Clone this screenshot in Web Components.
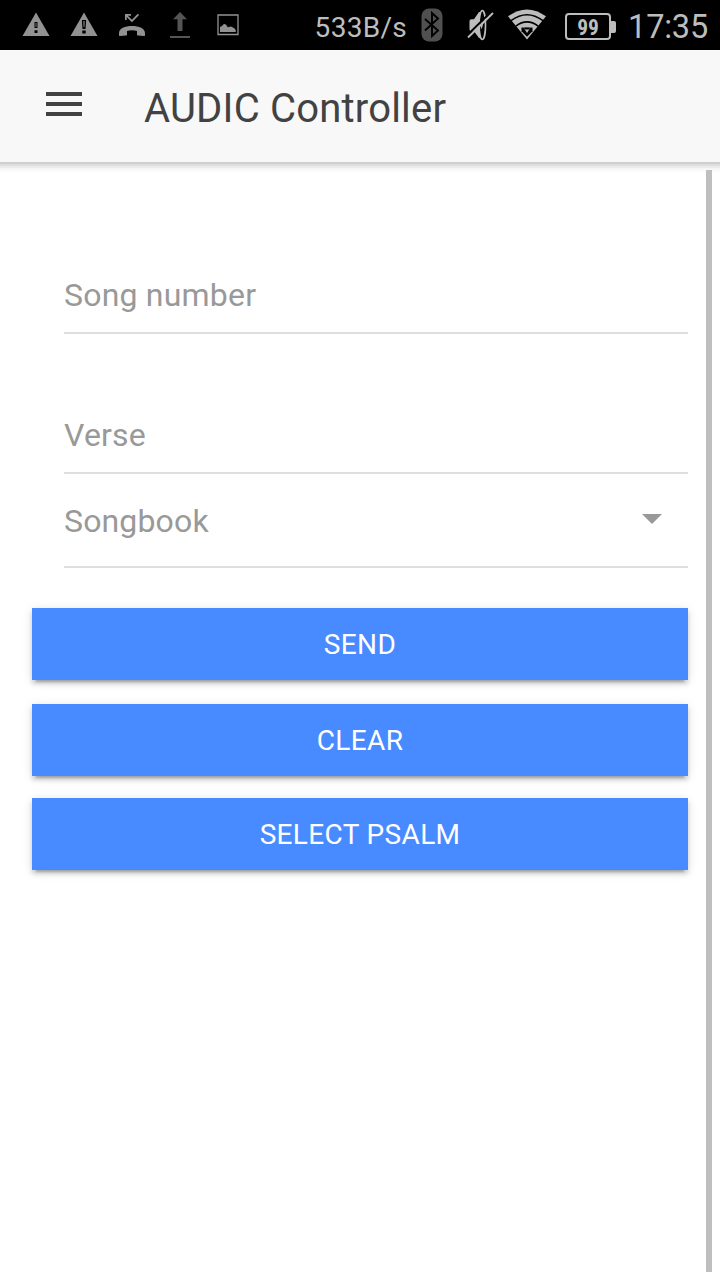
<!DOCTYPE html>
<html lang="en">
<head>
<meta charset="utf-8">
<title>AUDIC Controller</title>
<style>
  body {
    margin: 0;
    background: #fff;
    font-family: Roboto, "Noto Sans", sans-serif;
  }
</style>
</head>
<body>
<audic-app>
  <status-bar slot="status" speed="533B/s" battery="99" time="17:35"></status-bar>
  <nav-bar slot="header">AUDIC Controller</nav-bar>
  <text-field>Song number</text-field>
  <text-field>Verse</text-field>
  <select-field>Songbook</select-field>
  <action-button>SEND</action-button>
  <action-button>CLEAR</action-button>
  <action-button class="tight">SELECT PSALM</action-button>
</audic-app>

<script>
const ICONS = {
  warning: {
    box: "0 0 28 28",
    body: `<path d="M14 2.500 27.500 26H.5Z" fill="#929292"/>
      <path d="M12.500 12h3v6h-3zM12.500 20.300h3v2.700h-3z" fill="#000"/>
      <path d="M13.500 13h1v4h-1z" fill="#777"/>`,
  },
  warningTall: {
    box: "0 0 28 28",
    body: `<path d="M14 2.500 27.500 26H.5Z" fill="#929292"/>
      <path d="M12 10h4v3l-.5 6h-3l-.5-6zM12.300 20.500h3.400v3h-3.400z" fill="#000"/>
      <path d="M13.300 11h1.400v3l-.3 3h-.8l-.3-3z" fill="#777"/>`,
  },
  missedCall: {
    box: "0 0 28 28",
    body: `<g fill="#929292"><path d="M1 23c0-4.500 6-7 13-7s13 2.500 13 7v2c0 .7-.4 1-1 1l-6-.6c-.6 0-1-.4-1-1V21c-3.200-1-6.800-1-10 0v3.400c0 .6-.4 1-1 1L2 26c-.6 0-1-.3-1-1z"/>
      <path d="M7 4h6v1.700H9.900l4 4 5.900-6 1.300 1.300-7.200 7.200L8.700 7V10H7z"/></g>`,
  },
  upload: {
    box: "0 0 28 28",
    body: `<path d="M14 2 21 9.300h-4.500V21h-5V9.300H7zM4 26h20v2H4z" fill="#555"/>`,
  },
  picture: {
    box: "0 0 28 28",
    body: `<path d="M4 5h20v19.500H4z" fill="none" stroke="#929292" stroke-width="1.300"/>
      <path d="M6 22v-5l2-1 2-2.200 2.200 1 1.500 2.500 3.300-.8 3 1.500 1.700 2v2z" fill="#929292"/>`,
  },
  bluetooth: {
    box: "0 0 22 34",
    body: `<rect x=".5" y=".5" width="21" height="33" rx="7.500" fill="#505050"/>
      <path d="M4 11 17 22.500 11 28V5l6 5.500L4 22.500" fill="none" stroke="#000" stroke-width="1.900"/>`,
  },
  mute: {
    box: "0 0 28 34",
    body: `<path d="M2.500 13q0-1.500 2-1.800H7L12 4h2v26h-2l-5-6.700H4.500q-2-.3-2-1.800z" fill="#bdbdbd"/>
      <ellipse cx="15.300" cy="17" rx="3.200" ry="14.500" fill="#000" stroke="#bdbdbd" stroke-width="1.600"/>
      <path d="M13.800 12.500q4 4.500 0 9z" fill="#bdbdbd"/>
      <path d="M0 27.500 25 3" stroke="#000" stroke-width="2"/>
      <path d="M1 29.500 26 5" stroke="#bdbdbd" stroke-width="1.900"/>`,
  },
  wifi: {
    box: "0 0 40 32",
    body: `<path d="M1 8.300Q20-5.500 39 8.300L20 31.500Z" fill="#bdbdbd"/>
      <path d="M4 12.600Q20 .8 36 12.600M8.800 18.200Q20 9.600 31.200 18.200" fill="none" stroke="#000" stroke-width="1.600"/>
      <path d="M14.500 19.500h11v3.700L20 28.800l-5.500-5.600z" fill="#000"/>
      <path d="M16.500 19.500h7L20 25z" fill="#bdbdbd"/>
      <path d="M17.300 19.500h5.400v2h-5.400z" fill="#000"/>`,
  },
};

class statusIcon extends HTMLElement {
  connectedCallback() {
    const icon = ICONS[this.getAttribute("name")];
    const [, , width, height] = icon.box.split(" ");

    this.attachShadow({ mode: "open" }).innerHTML = /* html */ `
      <style>
        :host { display: block; width: ${width}px; height: ${height}px; flex: none; }
        svg { display: block; }
      </style>
      <svg width="${width}" height="${height}" viewBox="${icon.box}">${icon.body}</svg>`;
  }
}

class batteryLevel extends HTMLElement {
  connectedCallback() {
    this.attachShadow({ mode: "open" }).innerHTML = /* html */ `
      <style>
        :host { display: flex; align-items: center; flex: none; }
        .cell {
          box-sizing: border-box;
          width: 46px;
          height: 27px;
          border: 2px solid #bdbdbd;
          border-radius: 4px;
          text-align: center;
          color: #bdbdbd;
          font: bold 21.500px/25px "Roboto Condensed", Roboto, sans-serif;
        }
        .cell span { display: inline-block; }
        .nub { width: 5px; height: 12px; border-radius: 0 2px 2px 0; background: #bdbdbd; }
      </style>
      <div class="cell"><span><slot></slot></span></div>
      <div class="nub"></div>`;
  }
}

class statusBar extends HTMLElement {
  connectedCallback() {
    this.attachShadow({ mode: "open" }).innerHTML = /* html */ `
      <style>
        :host {
          display: flex;
          justify-content: space-between;
          box-sizing: border-box;
          height: 50px;
          padding: 0 12px 0 22px;
          background: #000;
          color: #bdbdbd;
        }
        .notifications { display: flex; gap: 20px; padding-top: 10px; }
        .system { display: flex; align-items: flex-start; }
        .speed { font-size: 28px; line-height: 34px; letter-spacing: .3px; margin: 11px 14px 0 0; }
        .bluetooth { margin: 8px 24px 0 0; }
        .mute { margin: 8px 12px 0 0; }
        .wifi { margin: 8px 18px 0 0; }
        battery-level { margin: 13px 12px 0 0; }
        .time { font-size: 32.500px; line-height: 38px; letter-spacing: -.2px; margin-top: 8px; }
      </style>
      <div class="notifications">
        <status-icon name="warning"></status-icon>
        <status-icon name="warningTall"></status-icon>
        <status-icon name="missedCall"></status-icon>
        <status-icon name="upload"></status-icon>
        <status-icon name="picture"></status-icon>
      </div>
      <div class="system">
        <span class="speed">${this.getAttribute("speed")}</span>
        <status-icon class="bluetooth" name="bluetooth"></status-icon>
        <status-icon class="mute" name="mute"></status-icon>
        <status-icon class="wifi" name="wifi"></status-icon>
        <battery-level>${this.getAttribute("battery")}</battery-level>
        <span class="time">${this.getAttribute("time")}</span>
      </div>`;
  }
}

class navBar extends HTMLElement {
  connectedCallback() {
    this.attachShadow({ mode: "open" }).innerHTML = /* html */ `
      <style>
        :host {
          display: flex;
          align-items: center;
          box-sizing: border-box;
          height: 112px;
          padding: 0 46px;
          gap: 62px;
          background: #f8f8f8;
          color: #424242;
        }
        button {
          display: grid;
          gap: 6px;
          width: 36px;
          padding: 0;
          margin-bottom: 4px;
          border: 0;
          background: none;
        }
        i { height: 4px; background: #424242; }
        h1 {
          margin: 5px 0 0;
          font-size: 40px;
          font-weight: 400;
          line-height: 48px;
          letter-spacing: .2px;
        }
      </style>
      <button aria-label="Menu"><i></i><i></i><i></i></button>
      <h1><slot></slot></h1>`;
  }
}

class textField extends HTMLElement {
  connectedCallback() {
    this.attachShadow({ mode: "open" }).innerHTML = /* html */ `
      <style>
        :host {
          display: flex;
          align-items: flex-end;
          box-sizing: border-box;
          height: 140px;
          margin-left: 32px;
          padding-bottom: 18px;
          border-bottom: 2px solid #dedede;
          color: #999;
          font-size: 32px;
          line-height: 38px;
          letter-spacing: .2px;
        }
      </style>
      <slot></slot>`;
  }
}

class selectField extends HTMLElement {
  connectedCallback() {
    this.attachShadow({ mode: "open" }).innerHTML = /* html */ `
      <style>
        :host {
          display: flex;
          align-items: center;
          justify-content: space-between;
          box-sizing: border-box;
          height: 94px;
          margin: 0 0 40px 32px;
          padding: 2px 26px 0 0;
          border-bottom: 2px solid #dedede;
          color: #999;
          font-size: 32px;
          line-height: 38px;
          letter-spacing: .15px;
        }
        .arrow {
          margin-bottom: 4px;
          border: 10px solid transparent;
          border-top-color: #999;
          border-bottom: 0;
        }
      </style>
      <span><slot></slot></span>
      <span class="arrow"></span>`;
  }
}

class actionButton extends HTMLElement {
  connectedCallback() {
    this.attachShadow({ mode: "open" }).innerHTML = /* html */ `
      <style>
        :host { display: block; margin-bottom: 24px; }
        :host(.tight) { margin-top: -2px; }
        button {
          display: block;
          box-sizing: border-box;
          width: 100%;
          height: 72px;
          padding: 2px 0 0;
          border: 0;
          background: #488aff;
          color: #fff;
          font: 400 28px/70px Roboto, sans-serif;
          letter-spacing: .35px;
          box-shadow: 0 4px 4px 0 rgba(0, 0, 0, .14),
            0 6px 2px -4px rgba(0, 0, 0, .2),
            0 2px 10px 0 rgba(0, 0, 0, .12);
        }
      </style>
      <button><slot></slot></button>`;
  }
}

class audicApp extends HTMLElement {
  connectedCallback() {
    this.attachShadow({ mode: "open" }).innerHTML = /* html */ `
      <style>
        :host {
          display: flex;
          flex-direction: column;
          height: 1280px;
          overflow: hidden;
        }
        .shadow {
          height: 10px;
          flex: none;
          background: linear-gradient(#cecece 0 2px, #dedede 2px 4px, #ebebeb 4px 6px, #f6f6f6 6px 8px, #fcfcfc 8px 10px);
        }
        .page { display: flex; flex: 1; }
        main { flex: 1; padding: 22px 18px 0 32px; }
        .scrollbar { width: 6px; margin: -2px 8px 8px 0; background: #bfbfbf; }
      </style>
      <slot name="status"></slot>
      <slot name="header"></slot>
      <div class="shadow"></div>
      <div class="page">
        <main><slot></slot></main>
        <div class="scrollbar"></div>
      </div>`;
  }
}

customElements.define("status-icon", statusIcon);
customElements.define("battery-level", batteryLevel);
customElements.define("status-bar", statusBar);
customElements.define("nav-bar", navBar);
customElements.define("text-field", textField);
customElements.define("select-field", selectField);
customElements.define("action-button", actionButton);
customElements.define("audic-app", audicApp);
</script>
</body>
</html>
